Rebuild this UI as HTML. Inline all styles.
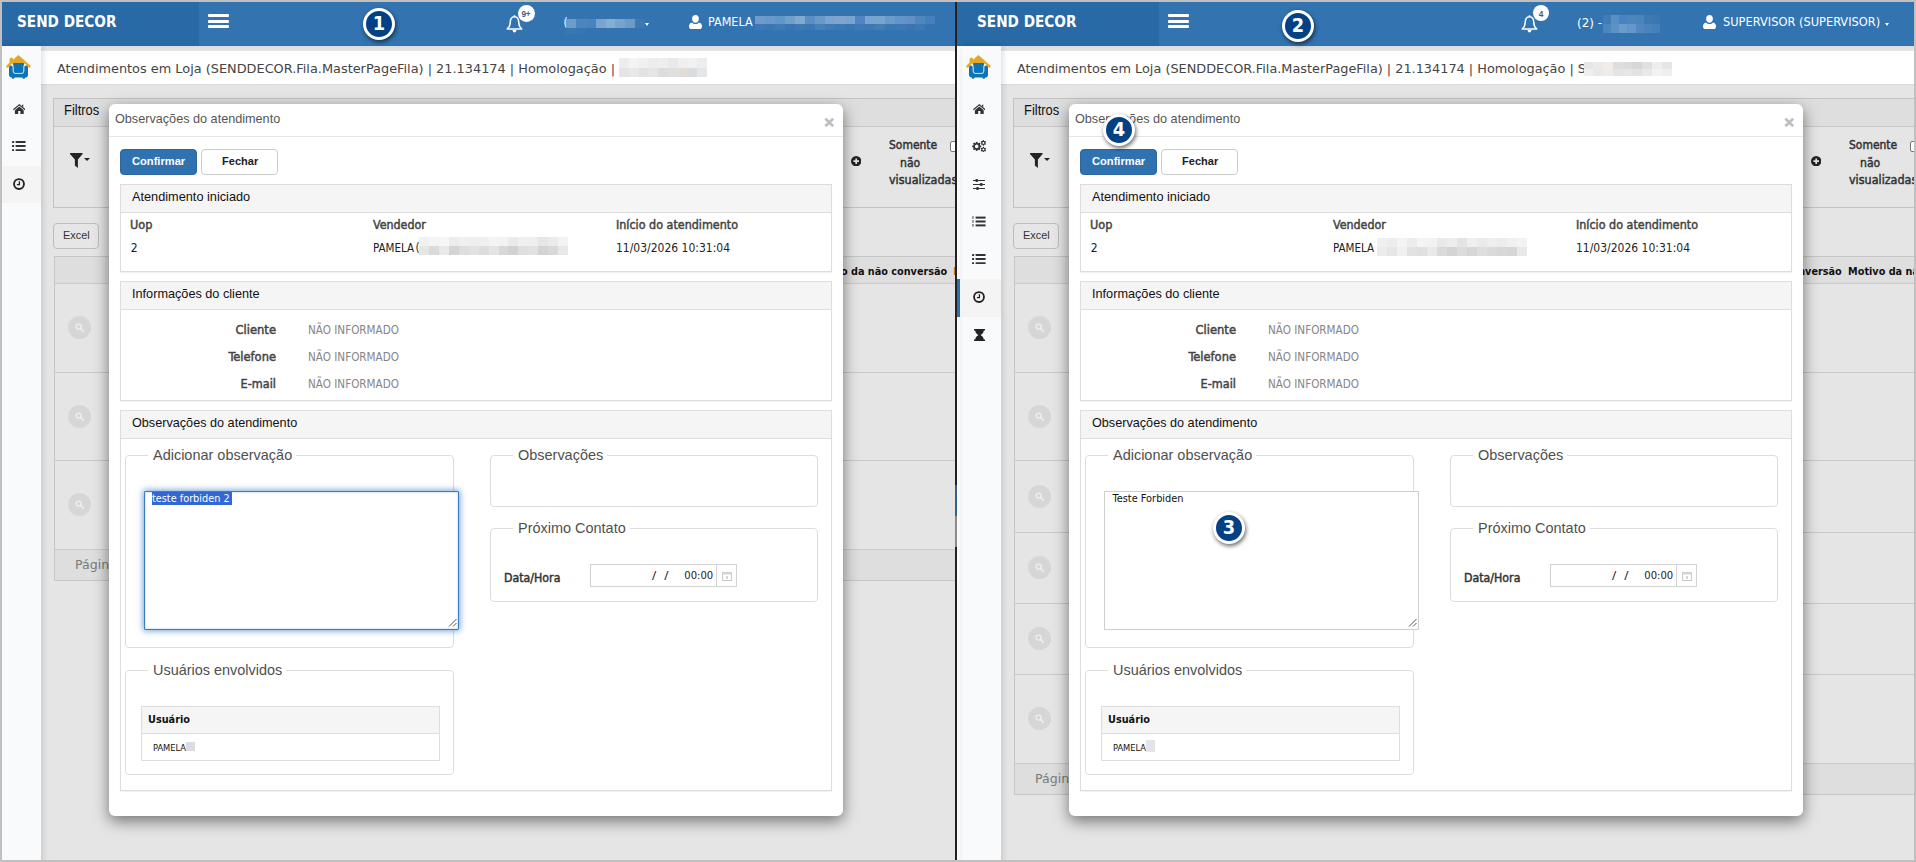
<!DOCTYPE html>
<html lang="pt-BR"><head><meta charset="utf-8"><title>Atendimentos em Loja</title>
<style>
html,body{margin:0;padding:0}
body{width:1916px;height:862px;background:#c0c0c0;position:relative;overflow:hidden;font-family:"Liberation Sans",sans-serif}
.pane{position:absolute;top:2px;height:858px;overflow:hidden;background:#e5e5e5}
#pl{left:2px;width:953px}
#pr{left:957px;width:957px}
.fr{position:absolute;top:-2px;width:0;height:0}
#pl .fr{left:-2px}
#pr .fr{left:3px}
#dv{position:absolute;left:955px;top:2px;width:2px;height:858px;background:#222}
.a{position:absolute;display:block}
.t{white-space:nowrap}
.nb{box-sizing:border-box;width:32.8px;height:32.8px;border-radius:50%;background:#024186;border:3.95px solid #fff;box-shadow:1px 2px 4px rgba(0,0,0,.6);color:#fff;font:bold 19.8px/26.4px "DejaVu Sans",sans-serif;text-align:center;overflow:hidden}
</style></head>
<body>
<div class="pane" id="pl"><div class="fr">
<div class="a " style="left:41px;top:51px;width:960px;height:33px;background:#fff;"></div>
<div class="a " style="left:41px;top:84px;width:960px;height:1px;background:#d9d9d9;"></div>
<div class="a t " style="left:56.8px;top:59.67px;font:12.8px/17px 'DejaVu Sans',sans-serif;color:#444;transform:scale(1.0059,1.000);transform-origin:0 12.93px;">Atendimentos em Loja (SENDDECOR.Fila.MasterPageFila) | 21.134174 | Homologação | </div>
<i class="a" style="left:619.0px;top:58.0px;width:10.1px;height:9.8px;background:#ededed"></i><i class="a" style="left:628.8px;top:58.0px;width:10.1px;height:9.8px;background:#f4f4f6"></i><i class="a" style="left:638.6px;top:58.0px;width:10.1px;height:9.8px;background:#f0f0f0"></i><i class="a" style="left:648.3px;top:58.0px;width:10.1px;height:9.8px;background:#ececec"></i><i class="a" style="left:658.1px;top:58.0px;width:10.1px;height:9.8px;background:#eeeeee"></i><i class="a" style="left:667.9px;top:58.0px;width:10.1px;height:9.8px;background:#e9e9e9"></i><i class="a" style="left:677.7px;top:58.0px;width:10.1px;height:9.8px;background:#efefef"></i><i class="a" style="left:687.4px;top:58.0px;width:10.1px;height:9.8px;background:#f1f1f1"></i><i class="a" style="left:697.2px;top:58.0px;width:10.1px;height:9.8px;background:#ededed"></i><i class="a" style="left:619.0px;top:67.5px;width:10.1px;height:9.8px;background:#e4e4e4"></i><i class="a" style="left:628.8px;top:67.5px;width:10.1px;height:9.8px;background:#e8e8e8"></i><i class="a" style="left:638.6px;top:67.5px;width:10.1px;height:9.8px;background:#e2e2e2"></i><i class="a" style="left:648.3px;top:67.5px;width:10.1px;height:9.8px;background:#e6e6e6"></i><i class="a" style="left:658.1px;top:67.5px;width:10.1px;height:9.8px;background:#dcdcde"></i><i class="a" style="left:667.9px;top:67.5px;width:10.1px;height:9.8px;background:#dfdfdf"></i><i class="a" style="left:677.7px;top:67.5px;width:10.1px;height:9.8px;background:#e3ddd8"></i><i class="a" style="left:687.4px;top:67.5px;width:10.1px;height:9.8px;background:#dadde0"></i><i class="a" style="left:697.2px;top:67.5px;width:10.1px;height:9.8px;background:#e6e6e6"></i>
<div class="a " style="left:53px;top:98px;width:960px;height:110px;box-sizing:border-box;border:1px solid #c3c3c3;background:#e5e5e5;"></div>
<div class="a " style="left:54px;top:99px;width:960px;height:27px;background:#dedede;border-bottom:1px solid #c9c9c9;"></div>
<div class="a t " style="left:64px;top:101.99px;font:13.6px/18px 'Liberation Sans',sans-serif;color:#111;transform:scale(0.9509,1.060);transform-origin:0 13.71px;">Filtros</div>
<svg class="a" style="left:70px;top:152.5px;" width="12.6" height="15" viewBox="0 0 12.6 15"><path fill="#222" d="M0.2 0 H12.4 Q12.9 0.6 12.4 1.2 L7.9 6.4 V15 L4.9 12.6 V6.4 L0.2 1.2 Q-0.3 0.6 0.2 0 Z"/></svg>
<div class="a " style="left:84.4px;top:158.2px;width:0px;height:0px;border-left:3.2px solid transparent;border-right:3.2px solid transparent;border-top:3.6px solid #222;"></div>
<svg class="a" style="left:850.5px;top:155.8px;" width="10.4" height="10.4" viewBox="0 0 10.4 10.4"><circle cx="5.2" cy="5.2" r="5.2" fill="#222"/><path d="M5.2 2.4 V8 M2.4 5.2 H8" stroke="#e5e5e5" stroke-width="1.7"/></svg>
<div class="a t " style="left:888.6px;top:136.88px;font:12.2px/16px 'DejaVu Sans Condensed','DejaVu Sans',sans-serif;color:#333;transform:scale(0.9815,1.000);transform-origin:0 12.22px;-webkit-text-stroke:0.45px #333;">Somente</div>
<div class="a t " style="left:899.6px;top:154.98px;font:12.2px/16px 'DejaVu Sans Condensed','DejaVu Sans',sans-serif;color:#333;transform:scale(0.9907,1.000);transform-origin:0 12.22px;-webkit-text-stroke:0.45px #333;">não</div>
<div class="a t " style="left:888.6px;top:172.18px;font:12.2px/16px 'DejaVu Sans Condensed','DejaVu Sans',sans-serif;color:#333;transform:scale(1.0211,1.000);transform-origin:0 12.22px;-webkit-text-stroke:0.45px #333;">visualizadas</div>
<div class="a " style="left:950px;top:141px;width:11px;height:11px;box-sizing:border-box;border:1px solid #767676;border-radius:2px;background:#fff;"></div>
<div class="a " style="left:53px;top:223px;width:45.5px;height:25.6px;box-sizing:border-box;border:1px solid #bdbdbd;border-radius:4px;background:#e6e6e6;"></div>
<div class="a t " style="left:62.8px;top:226.65px;font:11.7px/15px 'Liberation Sans',sans-serif;color:#333;transform:scale(0.9373,1.000);transform-origin:0 11.55px;">Excel</div>
<div class="a " style="left:54px;top:256px;width:960px;height:325px;box-sizing:border-box;border:1px solid #c6c6c6;border-right:0;background:#e5e5e5;"></div>
<div class="a " style="left:55px;top:257px;width:960px;height:26px;background:#dedede;"></div>
<div class="a " style="left:55px;top:282.5px;width:960px;height:1px;background:#cacaca;"></div>
<div class="a " style="left:55px;top:371.5px;width:960px;height:1px;background:#cacaca;"></div>
<div class="a " style="left:55px;top:459.5px;width:960px;height:1px;background:#cacaca;"></div>
<div class="a " style="left:55px;top:548.5px;width:960px;height:1px;background:#cacaca;"></div>
<div class="a " style="left:55px;top:549px;width:960px;height:31px;background:#dedede;border-top:1px solid #cacaca;box-sizing:border-box;"></div>
<div class="a" style="left:68.0px;top:316.0px;width:23px;height:23px;border-radius:50%;background:#d6d6d6"></div><svg class="a" style="left:75.0px;top:323.0px;" width="9" height="9" viewBox="0 0 9 9"><circle cx="3.6" cy="3.6" r="2.5" fill="none" stroke="#f0f0f0" stroke-width="1.3"/><path d="M5.5 5.5 L8.2 8.2" stroke="#f0f0f0" stroke-width="1.6" stroke-linecap="round"/></svg>
<div class="a" style="left:68.0px;top:404.5px;width:23px;height:23px;border-radius:50%;background:#d6d6d6"></div><svg class="a" style="left:75.0px;top:411.5px;" width="9" height="9" viewBox="0 0 9 9"><circle cx="3.6" cy="3.6" r="2.5" fill="none" stroke="#f0f0f0" stroke-width="1.3"/><path d="M5.5 5.5 L8.2 8.2" stroke="#f0f0f0" stroke-width="1.6" stroke-linecap="round"/></svg>
<div class="a" style="left:68.0px;top:493.0px;width:23px;height:23px;border-radius:50%;background:#d6d6d6"></div><svg class="a" style="left:75.0px;top:500.0px;" width="9" height="9" viewBox="0 0 9 9"><circle cx="3.6" cy="3.6" r="2.5" fill="none" stroke="#f0f0f0" stroke-width="1.3"/><path d="M5.5 5.5 L8.2 8.2" stroke="#f0f0f0" stroke-width="1.6" stroke-linecap="round"/></svg>
<div class="a t " style="left:75px;top:557.44px;font:12.6px/16px 'DejaVu Sans',sans-serif;color:#7a7a7a;">Página</div>
<div class="a t " style="left:947.20px;top:264.54px;font:bold 9.7px/13px 'DejaVu Sans',sans-serif;color:#111;transform:translateX(-100%);">Motivo da não conversão</div>
<div class="a t " style="left:953.2px;top:264.54px;font:bold 9.7px/13px 'DejaVu Sans',sans-serif;color:#b07020;">Motivo</div>
<div class="a " style="left:-3px;top:2px;width:201.5px;height:44px;background:#2869a6;"></div>
<div class="a " style="left:198.5px;top:2px;width:770px;height:44px;background:#3273b0;"></div>
<div class="a " style="left:-3px;top:46px;width:980px;height:5px;background:linear-gradient(#dcdcdc,#e5e5e5);"></div>
<div class="a t " style="left:17.3px;top:10.96px;font:bold 16.6px/22px 'DejaVu Sans Condensed','DejaVu Sans',sans-serif;color:#fff;transform:scale(0.9147,1.000);transform-origin:0 16.74px;">SEND DECOR</div>
<div class="a " style="left:207.5px;top:14px;width:21.3px;height:3px;background:#fff;border-radius:1px;"></div>
<div class="a " style="left:207.5px;top:19.6px;width:21.3px;height:3px;background:#fff;border-radius:1px;"></div>
<div class="a " style="left:207.5px;top:25.2px;width:21.3px;height:3px;background:#fff;border-radius:1px;"></div>
<svg class="a" style="left:506px;top:15px;" width="17" height="18" viewBox="0 0 17 18"><path fill="none" stroke="#fff" stroke-width="1.5" stroke-linejoin="round" d="M8.5 1.8 C5.4 1.8 4.3 4.4 4.3 7 C4.3 10.6 2.8 12.6 1.2 14 H15.8 C14.2 12.6 12.7 10.6 12.7 7 C12.7 4.4 11.6 1.8 8.5 1.8 Z"/><path fill="#fff" d="M7.7 0.3 H9.3 V2 H7.7 Z M6.6 15 H10.4 C10.4 16.4 9.6 17.4 8.5 17.4 C7.4 17.4 6.6 16.4 6.6 15 Z"/></svg>
<div class="a " style="left:518px;top:5.3px;width:17px;height:17px;border-radius:50%;background:#fff;"></div>
<div class="a t " style="left:521.6px;top:8.96px;font:bold 8.2px/11px 'Liberation Sans',sans-serif;color:#3a5d8c;letter-spacing:-0.3px;">9+</div>
<div class="a t " style="left:563.6px;top:16.12px;font:11.8px/15px 'DejaVu Sans Condensed','DejaVu Sans',sans-serif;color:#fff;">(</div>
<i class="a" style="left:566.0px;top:19.0px;width:10.2px;height:9.3px;background:#6f9bcb"></i><i class="a" style="left:575.9px;top:19.0px;width:10.2px;height:9.3px;background:#4d86bd"></i><i class="a" style="left:585.8px;top:19.0px;width:10.2px;height:9.3px;background:#4a84bc"></i><i class="a" style="left:595.6px;top:19.0px;width:10.2px;height:9.3px;background:#7aa3ce"></i><i class="a" style="left:605.5px;top:19.0px;width:10.2px;height:9.3px;background:#86aed4"></i><i class="a" style="left:615.4px;top:19.0px;width:10.2px;height:9.3px;background:#78a3cf"></i><i class="a" style="left:625.2px;top:19.0px;width:10.2px;height:9.3px;background:#6c9ac9"></i><i class="a" style="left:635.1px;top:19.0px;width:10.2px;height:9.3px;background:#3d7ab4"></i>
<i class="a" style="left:566.0px;top:28.0px;width:9.8px;height:6.3px;background:#3a78b4"></i><i class="a" style="left:575.5px;top:28.0px;width:9.8px;height:6.3px;background:#3875b2"></i>
<div class="a " style="left:645px;top:22.5px;width:0px;height:0px;border-left:2px solid transparent;border-right:2px solid transparent;border-top:3px solid #fff;"></div>
<svg class="a" style="left:689px;top:15.3px;" width="13" height="14" viewBox="0 0 13 14"><path fill="#fff" d="M6.5 0 C8.6 0 9.9 1.6 9.9 3.8 C9.9 6 8.6 7.8 6.5 7.8 C4.4 7.8 3.1 6 3.1 3.8 C3.1 1.6 4.4 0 6.5 0 Z M3 7.4 C3.9 8.5 5.1 9.1 6.5 9.1 C7.9 9.1 9.1 8.5 10 7.4 C11.9 7.8 13 9.2 13 11.4 C13 13 12 14 10.6 14 H2.4 C1 14 0 13 0 11.4 C0 9.2 1.1 7.8 3 7.4 Z"/></svg>
<div class="a t " style="left:708px;top:15.32px;font:11.8px/15px 'DejaVu Sans Condensed','DejaVu Sans',sans-serif;color:#fff;transform:scale(1.0564,1.000);transform-origin:0 11.58px;">PAMELA</div>
<i class="a" style="left:755.0px;top:16.0px;width:10.3px;height:8.3px;background:#6e9bc9"></i><i class="a" style="left:765.0px;top:16.0px;width:10.3px;height:8.3px;background:#6a99c8"></i><i class="a" style="left:775.0px;top:16.0px;width:10.3px;height:8.3px;background:#5f97c7"></i><i class="a" style="left:785.0px;top:16.0px;width:10.3px;height:8.3px;background:#739ecb"></i><i class="a" style="left:795.0px;top:16.0px;width:10.3px;height:8.3px;background:#81a8cf"></i><i class="a" style="left:805.0px;top:16.0px;width:10.3px;height:8.3px;background:#5b8fc4"></i><i class="a" style="left:815.0px;top:16.0px;width:10.3px;height:8.3px;background:#6a99c7"></i><i class="a" style="left:825.0px;top:16.0px;width:10.3px;height:8.3px;background:#7aa3cf"></i><i class="a" style="left:835.0px;top:16.0px;width:10.3px;height:8.3px;background:#80a4cf"></i><i class="a" style="left:845.0px;top:16.0px;width:10.3px;height:8.3px;background:#7aa3cd"></i><i class="a" style="left:855.0px;top:16.0px;width:10.3px;height:8.3px;background:#5284c0"></i><i class="a" style="left:865.0px;top:16.0px;width:10.3px;height:8.3px;background:#79a4cd"></i><i class="a" style="left:875.0px;top:16.0px;width:10.3px;height:8.3px;background:#79a4cd"></i><i class="a" style="left:885.0px;top:16.0px;width:10.3px;height:8.3px;background:#6c9acb"></i><i class="a" style="left:895.0px;top:16.0px;width:10.3px;height:8.3px;background:#6495c7"></i><i class="a" style="left:905.0px;top:16.0px;width:10.3px;height:8.3px;background:#6490c6"></i><i class="a" style="left:915.0px;top:16.0px;width:10.3px;height:8.3px;background:#4f86be"></i><i class="a" style="left:925.0px;top:16.0px;width:10.3px;height:8.3px;background:#4580ba"></i>
<i class="a" style="left:755.0px;top:24.0px;width:10.3px;height:6.3px;background:#3c79b5"></i><i class="a" style="left:765.0px;top:24.0px;width:10.3px;height:6.3px;background:#3a78b4"></i><i class="a" style="left:775.0px;top:24.0px;width:10.3px;height:6.3px;background:#3f7cb7"></i><i class="a" style="left:785.0px;top:24.0px;width:10.3px;height:6.3px;background:#3875b2"></i><i class="a" style="left:795.0px;top:24.0px;width:10.3px;height:6.3px;background:#3d7ab5"></i><i class="a" style="left:805.0px;top:24.0px;width:10.3px;height:6.3px;background:#3a78b4"></i><i class="a" style="left:815.0px;top:24.0px;width:10.3px;height:6.3px;background:#4582bb"></i><i class="a" style="left:825.0px;top:24.0px;width:10.3px;height:6.3px;background:#3f7cb7"></i><i class="a" style="left:835.0px;top:24.0px;width:10.3px;height:6.3px;background:#3b78b4"></i><i class="a" style="left:845.0px;top:24.0px;width:10.3px;height:6.3px;background:#3875b2"></i><i class="a" style="left:855.0px;top:24.0px;width:10.3px;height:6.3px;background:#3e7bb6"></i><i class="a" style="left:865.0px;top:24.0px;width:10.3px;height:6.3px;background:#3c79b5"></i><i class="a" style="left:875.0px;top:24.0px;width:10.3px;height:6.3px;background:#417eb8"></i><i class="a" style="left:885.0px;top:24.0px;width:10.3px;height:6.3px;background:#3a78b4"></i><i class="a" style="left:895.0px;top:24.0px;width:10.3px;height:6.3px;background:#3d7ab5"></i><i class="a" style="left:905.0px;top:24.0px;width:10.3px;height:6.3px;background:#3875b2"></i><i class="a" style="left:915.0px;top:24.0px;width:10.3px;height:6.3px;background:#3c79b5"></i>
<div class="a " style="left:-3px;top:46px;width:44px;height:820px;background:#fff;"></div>
<div class="a " style="left:2px;top:46px;width:39px;height:820px;background:#f9fafc;box-shadow:1px 0 7px rgba(0,0,0,.16);"></div>
<svg class="a" style="left:6px;top:55px;" width="25" height="24" viewBox="0 0 25 24"><path fill="#e2a82a" d="M12.4 0 L25 11.2 L23.3 13 L20.6 10.6 L19.5 8.8 H5.5 L4.4 10.6 L1.7 13 L0 11.2 L3.6 7.6 V3.6 L5.4 2.6 L7 3.6 V4.8 Z"/><path fill="#0e73b5" d="M8 8 H17 Q18.3 8 18.1 9.4 L17.4 18 H7.6 L6.9 9.4 Q6.7 8 8 8 Z"/><path fill="#0e73b5" d="M3 12.4 Q3 10.4 5 10.4 Q6.8 10.4 6.8 12.4 V16 Q6.8 18.8 9.4 18.8 H15.6 Q18.2 18.8 18.2 16 V12.4 Q18.2 10.4 20 10.4 Q22 10.4 22 12.4 V19.5 Q22 22.4 19.4 22.4 L18.6 23.8 H17 L16.4 22.4 H8.6 L8 23.8 H6.4 L5.6 22.4 Q3 22.4 3 19.5 Z"/><path fill="none" stroke="#b7d6ec" stroke-width="0.9" d="M7.3 10.4 V16.2 Q7.3 18.4 9.6 18.4 H15.4 Q17.7 18.4 17.7 16.2 V10.4"/></svg>
<div class="a " style="left:2px;top:166px;width:39px;height:37px;background:#f4f4f5;"></div>
<svg class="a" style="left:12.7px;top:103.5px;" width="12.6" height="10" viewBox="0 0 12.6 10"><path fill="#333" d="M6.3 0 L12.6 5.3 L11.8 6.2 L6.3 1.6 L0.8 6.2 L0 5.3 Z M8.9 0.7 H10.3 V3 L8.9 1.8 Z M6.3 2.6 L10.7 6.3 V10 H7.4 V7 H5.2 V10 H1.9 V6.3 Z"/></svg>
<svg class="a" style="left:12.2px;top:141.1px;" width="13.6" height="10.2" viewBox="0 0 13.6 10.2"><rect x="0" y="0" width="2.1" height="2" rx=".5" fill="#333"/><rect x="3.6" y="0" width="10" height="2" rx=".4" fill="#333"/><rect x="0" y="4.1" width="2.1" height="2" rx=".5" fill="#333"/><rect x="3.6" y="4.1" width="10" height="2" rx=".4" fill="#333"/><rect x="0" y="8.2" width="2.1" height="2" rx=".5" fill="#333"/><rect x="3.6" y="8.2" width="10" height="2" rx=".4" fill="#333"/></svg>
<svg class="a" style="left:13px;top:178.1px;" width="12" height="12" viewBox="0 0 12 12"><circle cx="6" cy="6" r="4.95" fill="none" stroke="#222" stroke-width="1.85"/><path d="M6.4 3.2 V6.6 H3.9" fill="none" stroke="#222" stroke-width="1.35"/></svg>
<div class="a " style="left:109px;top:104px;width:734px;height:712px;background:#fff;border-radius:6px;box-shadow:0 5px 15px rgba(0,0,0,.5);"></div>
<div class="a " style="left:109px;top:136px;width:734px;height:1px;background:#e5e5e5;"></div>
<div class="a t " style="left:115.4px;top:111.13px;font:12.6px/16px 'Liberation Sans',sans-serif;color:#555;transform:scale(1.0041,1.040);transform-origin:0 12.37px;">Observações do atendimento</div>
<div class="a t " style="left:824.3px;top:112.01px;font:bold 17px/22px 'Liberation Sans',sans-serif;color:#bdbdbd;-webkit-text-stroke:0.7px #bdbdbd;">×</div>
<div class="a " style="left:120px;top:149px;width:77px;height:26px;box-sizing:border-box;background:#3071b0;border:1px solid #2b66a0;border-radius:4px;"></div>
<div class="a t " style="left:132.2px;top:154.29px;font:bold 11px/14px 'Liberation Sans',sans-serif;color:#fff;transform:scale(1.0121,1.000);transform-origin:0 10.81px;">Confirmar</div>
<div class="a " style="left:201px;top:149px;width:77px;height:26px;box-sizing:border-box;background:#fff;border:1px solid #ccc;border-radius:4px;"></div>
<div class="a t " style="left:221.8px;top:154.29px;font:bold 11px/14px 'Liberation Sans',sans-serif;color:#222;transform:scale(1.0034,1.000);transform-origin:0 10.81px;">Fechar</div>
<div class="a " style="left:120px;top:184px;width:712px;height:88px;box-sizing:border-box;border:1px solid #ddd;background:#fff;box-shadow:0 1px 1px rgba(0,0,0,.05);"></div><div class="a " style="left:121px;top:185px;width:710px;height:28px;box-sizing:border-box;background:#f5f5f5;border-bottom:1px solid #ddd;"></div><div class="a t " style="left:132.2px;top:189.13px;font:12.6px/16px 'Liberation Sans',sans-serif;color:#111;transform:scale(1.0109,1.040);transform-origin:0 12.37px;">Atendimento iniciado</div>
<div class="a " style="left:120px;top:281px;width:712px;height:119.5px;box-sizing:border-box;border:1px solid #ddd;background:#fff;box-shadow:0 1px 1px rgba(0,0,0,.05);"></div><div class="a " style="left:121px;top:282px;width:710px;height:28px;box-sizing:border-box;background:#f5f5f5;border-bottom:1px solid #ddd;"></div><div class="a t " style="left:132.2px;top:286.13px;font:12.6px/16px 'Liberation Sans',sans-serif;color:#111;transform:scale(1.0070,1.040);transform-origin:0 12.37px;">Informações do cliente</div>
<div class="a " style="left:120px;top:410px;width:712px;height:380.5px;box-sizing:border-box;border:1px solid #ddd;background:#fff;box-shadow:0 1px 1px rgba(0,0,0,.05);"></div><div class="a " style="left:121px;top:411px;width:710px;height:28px;box-sizing:border-box;background:#f5f5f5;border-bottom:1px solid #ddd;"></div><div class="a t " style="left:132.2px;top:415.13px;font:12.6px/16px 'Liberation Sans',sans-serif;color:#111;transform:scale(1.0041,1.040);transform-origin:0 12.37px;">Observações do atendimento</div>
<div class="a t " style="left:130.2px;top:217.08px;font:12.2px/16px 'DejaVu Sans Condensed','DejaVu Sans',sans-serif;color:#444;transform:scale(1.0321,1.000);transform-origin:0 12.22px;-webkit-text-stroke:0.45px #444;">Uop</div>
<div class="a t " style="left:373px;top:217.08px;font:12.2px/16px 'DejaVu Sans Condensed','DejaVu Sans',sans-serif;color:#444;transform:scale(1.0126,1.000);transform-origin:0 12.22px;-webkit-text-stroke:0.45px #444;">Vendedor</div>
<div class="a t " style="left:616px;top:217.08px;font:12.2px/16px 'DejaVu Sans Condensed','DejaVu Sans',sans-serif;color:#444;transform:scale(1.0187,1.000);transform-origin:0 12.22px;-webkit-text-stroke:0.45px #444;">Início do atendimento</div>
<div class="a t " style="left:130.8px;top:239.75px;font:12px/16px 'DejaVu Sans Condensed','DejaVu Sans',sans-serif;color:#222;transform:scale(1.0000,1.050);transform-origin:0 12.15px;">2</div>
<div class="a t " style="left:373.2px;top:239.75px;font:12px/16px 'DejaVu Sans Condensed','DejaVu Sans',sans-serif;color:#222;transform:scale(0.9595,1.050);transform-origin:0 12.15px;">PAMELA</div>
<div class="a t " style="left:616.2px;top:239.75px;font:12px/16px 'DejaVu Sans Condensed','DejaVu Sans',sans-serif;color:#222;transform:scale(0.9989,1.050);transform-origin:0 12.15px;">11/03/2026 10:31:04</div>
<i class="a" style="left:419.0px;top:237.0px;width:10.2px;height:9.3px;background:#f1f1f1"></i><i class="a" style="left:428.9px;top:237.0px;width:10.2px;height:9.3px;background:#f4f4f4"></i><i class="a" style="left:438.9px;top:237.0px;width:10.2px;height:9.3px;background:#f6f6f6"></i><i class="a" style="left:448.8px;top:237.0px;width:10.2px;height:9.3px;background:#ececec"></i><i class="a" style="left:458.7px;top:237.0px;width:10.2px;height:9.3px;background:#f0f0f0"></i><i class="a" style="left:468.7px;top:237.0px;width:10.2px;height:9.3px;background:#eeeeee"></i><i class="a" style="left:478.6px;top:237.0px;width:10.2px;height:9.3px;background:#efefef"></i><i class="a" style="left:488.5px;top:237.0px;width:10.2px;height:9.3px;background:#f4f4f4"></i><i class="a" style="left:498.5px;top:237.0px;width:10.2px;height:9.3px;background:#f2f2f2"></i><i class="a" style="left:508.4px;top:237.0px;width:10.2px;height:9.3px;background:#eaeaea"></i><i class="a" style="left:518.3px;top:237.0px;width:10.2px;height:9.3px;background:#efefef"></i><i class="a" style="left:528.3px;top:237.0px;width:10.2px;height:9.3px;background:#eeeeee"></i><i class="a" style="left:538.2px;top:237.0px;width:10.2px;height:9.3px;background:#e6e6e6"></i><i class="a" style="left:548.1px;top:237.0px;width:10.2px;height:9.3px;background:#ebebeb"></i><i class="a" style="left:558.1px;top:237.0px;width:10.2px;height:9.3px;background:#f3f3f3"></i>
<i class="a" style="left:419.0px;top:246.0px;width:10.2px;height:9.3px;background:#e6e6e6"></i><i class="a" style="left:428.9px;top:246.0px;width:10.2px;height:9.3px;background:#dadada"></i><i class="a" style="left:438.9px;top:246.0px;width:10.2px;height:9.3px;background:#e9e9e9"></i><i class="a" style="left:448.8px;top:246.0px;width:10.2px;height:9.3px;background:#d4d4d4"></i><i class="a" style="left:458.7px;top:246.0px;width:10.2px;height:9.3px;background:#dedede"></i><i class="a" style="left:468.7px;top:246.0px;width:10.2px;height:9.3px;background:#e2e2e2"></i><i class="a" style="left:478.6px;top:246.0px;width:10.2px;height:9.3px;background:#dddddd"></i><i class="a" style="left:488.5px;top:246.0px;width:10.2px;height:9.3px;background:#e4e4e4"></i><i class="a" style="left:498.5px;top:246.0px;width:10.2px;height:9.3px;background:#d8d8d8"></i><i class="a" style="left:508.4px;top:246.0px;width:10.2px;height:9.3px;background:#d2d2d2"></i><i class="a" style="left:518.3px;top:246.0px;width:10.2px;height:9.3px;background:#dfdfdf"></i><i class="a" style="left:528.3px;top:246.0px;width:10.2px;height:9.3px;background:#e1e1e1"></i><i class="a" style="left:538.2px;top:246.0px;width:10.2px;height:9.3px;background:#d3d3d3"></i><i class="a" style="left:548.1px;top:246.0px;width:10.2px;height:9.3px;background:#d9d9d9"></i><i class="a" style="left:558.1px;top:246.0px;width:10.2px;height:9.3px;background:#e8e8e8"></i>
<div class="a t " style="left:415.5px;top:239.75px;font:12px/16px 'DejaVu Sans Condensed','DejaVu Sans',sans-serif;color:#333;">(</div>
<div class="a t " style="left:275.90px;top:322.08px;font:12.2px/16px 'DejaVu Sans Condensed','DejaVu Sans',sans-serif;color:#444;transform:translateX(-100%) scale(1.0545,1.000);transform-origin:100% 12.22px;-webkit-text-stroke:0.45px #444;">Cliente</div>
<div class="a t " style="left:307.8px;top:322.99px;font:11.6px/15px 'DejaVu Sans Condensed','DejaVu Sans',sans-serif;color:#858585;transform:scale(1.0003,1.000);transform-origin:0 11.51px;">NÃO INFORMADO</div>
<div class="a t " style="left:275.90px;top:349.08px;font:12.2px/16px 'DejaVu Sans Condensed','DejaVu Sans',sans-serif;color:#444;transform:translateX(-100%) scale(1.0476,1.000);transform-origin:100% 12.22px;-webkit-text-stroke:0.45px #444;">Telefone</div>
<div class="a t " style="left:307.8px;top:349.99px;font:11.6px/15px 'DejaVu Sans Condensed','DejaVu Sans',sans-serif;color:#858585;transform:scale(1.0003,1.000);transform-origin:0 11.51px;">NÃO INFORMADO</div>
<div class="a t " style="left:275.90px;top:376.08px;font:12.2px/16px 'DejaVu Sans Condensed','DejaVu Sans',sans-serif;color:#444;transform:translateX(-100%) scale(1.0294,1.000);transform-origin:100% 12.22px;-webkit-text-stroke:0.45px #444;">E-mail</div>
<div class="a t " style="left:307.8px;top:376.99px;font:11.6px/15px 'DejaVu Sans Condensed','DejaVu Sans',sans-serif;color:#858585;transform:scale(1.0003,1.000);transform-origin:0 11.51px;">NÃO INFORMADO</div>
<div class="a " style="left:125px;top:455px;width:329px;height:193px;box-sizing:border-box;border:1px solid #ddd;border-radius:4px;"></div><div class="a " style="left:148px;top:453px;width:148px;height:5px;background:#fff;"></div><div class="a t " style="left:152.7px;top:445.78px;font:14.5px/19px 'Liberation Sans',sans-serif;color:#4f4f4f;transform:scale(0.9982,1.000);transform-origin:0 14.52px;">Adicionar observação</div>
<div class="a " style="left:490px;top:455px;width:328px;height:51.5px;box-sizing:border-box;border:1px solid #ddd;border-radius:4px;"></div><div class="a " style="left:513px;top:453px;width:94px;height:5px;background:#fff;"></div><div class="a t " style="left:517.7px;top:445.78px;font:14.5px/19px 'Liberation Sans',sans-serif;color:#4f4f4f;transform:scale(0.9972,1.000);transform-origin:0 14.52px;">Observações</div>
<div class="a " style="left:490px;top:528px;width:328px;height:73.5px;box-sizing:border-box;border:1px solid #ddd;border-radius:4px;"></div><div class="a " style="left:513px;top:526px;width:116.5px;height:5px;background:#fff;"></div><div class="a t " style="left:517.7px;top:518.78px;font:14.5px/19px 'Liberation Sans',sans-serif;color:#4f4f4f;transform:scale(0.9972,1.000);transform-origin:0 14.52px;">Próximo Contato</div>
<div class="a " style="left:125px;top:670px;width:329px;height:104.5px;box-sizing:border-box;border:1px solid #ddd;border-radius:4px;"></div><div class="a " style="left:148px;top:668px;width:138px;height:5px;background:#fff;"></div><div class="a t " style="left:152.7px;top:660.78px;font:14.5px/19px 'Liberation Sans',sans-serif;color:#4f4f4f;transform:scale(0.9956,1.000);transform-origin:0 14.52px;">Usuários envolvidos</div>
<div class="a " style="left:144px;top:491px;width:314.5px;height:138.5px;box-sizing:border-box;border:1px solid #3b7cc0;background:#fff;box-shadow:0 0 6px 1px rgba(70,135,205,.75), inset 0 0 2px rgba(60,125,195,.5);border-radius:1px;"></div>
<div class="a " style="left:152px;top:492px;width:79.8px;height:13px;background:#3367d1;"></div>
<div class="a t " style="left:152.4px;top:491.71px;font:9.8px/13px 'DejaVu Sans',sans-serif;color:#fff;transform:scale(0.9927,1.000);transform-origin:0 9.89px;">teste forbiden 2</div>
<svg class="a" style="left:448px;top:618px;" width="9" height="9" viewBox="0 0 9 9"><path d="M8.5 1 L1 8.5 M8.5 5 L5 8.5" stroke="#555" stroke-width="1"/></svg>
<div class="a t " style="left:503.6px;top:569.88px;font:12.2px/16px 'DejaVu Sans Condensed','DejaVu Sans',sans-serif;color:#333;transform:scale(1.0060,1.000);transform-origin:0 12.22px;-webkit-text-stroke:0.45px #333;">Data/Hora</div>
<div class="a " style="left:590px;top:564px;width:146.5px;height:22.5px;box-sizing:border-box;border:1px solid #d2d2d2;background:#fff;"></div>
<div class="a " style="left:716px;top:564px;width:1px;height:22.5px;background:#d2d2d2;"></div>
<div class="a t " style="left:651.5px;top:568.64px;font:10px/13px 'DejaVu Sans',sans-serif;color:#222;transform:scale(1.2510,1.000);transform-origin:0 9.96px;">/&nbsp;&nbsp;/</div>
<div class="a t " style="left:684.3px;top:568.64px;font:10px/13px 'DejaVu Sans',sans-serif;color:#222;">00:00</div>
<svg class="a" style="left:721.5px;top:570.5px;" width="10" height="10" viewBox="0 0 10 10"><rect x="0.5" y="1.5" width="9" height="8" fill="#fff" stroke="#c9c9c9" stroke-width="1"/><rect x="0.5" y="1.5" width="9" height="2" fill="#d5d5d5"/><rect x="4" y="5" width="2" height="3" fill="#d0d8e4"/></svg>
<div class="a " style="left:141px;top:706px;width:299px;height:54.5px;box-sizing:border-box;border:1px solid #ddd;background:#fff;"></div>
<div class="a " style="left:142px;top:707px;width:297px;height:26.5px;box-sizing:border-box;background:#f5f5f5;border-bottom:1px solid #ddd;"></div>
<div class="a t " style="left:147.6px;top:712.91px;font:bold 9.8px/13px 'DejaVu Sans',sans-serif;color:#111;transform:scale(0.9930,1.000);transform-origin:0 9.89px;">Usuário</div>
<div class="a t " style="left:152.6px;top:741.92px;font:9.2px/12px 'DejaVu Sans Condensed','DejaVu Sans',sans-serif;color:#111;transform:scale(1.0038,1.000);transform-origin:0 9.18px;">PAMELA</div>
<div class="a " style="left:186px;top:741.5px;width:8.6px;height:9px;background:#dcdcde;"></div>
<div class="a nb" style="left:362.7px;top:7.5px"><b style="display:inline-block;transform:scaleX(.9)">1</b></div>
</div></div>
<div id="dv"><i class="a" style="left:0;top:483px;width:2px;height:31px;background:#34608f"></i><i class="a" style="left:0;top:514px;width:2px;height:31px;background:#8a8a8a"></i></div>
<div class="pane" id="pr"><div class="fr">
<div class="a " style="left:41px;top:51px;width:960px;height:33px;background:#fff;"></div>
<div class="a " style="left:41px;top:84px;width:960px;height:1px;background:#d9d9d9;"></div>
<div class="a t " style="left:56.8px;top:59.67px;font:12.8px/17px 'DejaVu Sans',sans-serif;color:#444;transform:scale(1.0037,1.000);transform-origin:0 12.93px;">Atendimentos em Loja (SENDDECOR.Fila.MasterPageFila) | 21.134174 | Homologação | S</div>
<i class="a" style="left:623.5px;top:62.0px;width:10.1px;height:7.3px;background:#e6e6e6"></i><i class="a" style="left:633.3px;top:62.0px;width:10.1px;height:7.3px;background:#ebebeb"></i><i class="a" style="left:643.1px;top:62.0px;width:10.1px;height:7.3px;background:#f3ece8"></i><i class="a" style="left:652.8px;top:62.0px;width:10.1px;height:7.3px;background:#dedede"></i><i class="a" style="left:662.6px;top:62.0px;width:10.1px;height:7.3px;background:#d9dbde"></i><i class="a" style="left:672.4px;top:62.0px;width:10.1px;height:7.3px;background:#d6d6d6"></i><i class="a" style="left:682.2px;top:62.0px;width:10.1px;height:7.3px;background:#e0e0e0"></i><i class="a" style="left:691.9px;top:62.0px;width:10.1px;height:7.3px;background:#eeeeee"></i><i class="a" style="left:701.7px;top:62.0px;width:10.1px;height:7.3px;background:#e6e6e6"></i><i class="a" style="left:623.5px;top:69.0px;width:10.1px;height:7.3px;background:#eeeeee"></i><i class="a" style="left:633.3px;top:69.0px;width:10.1px;height:7.3px;background:#e9e9e9"></i><i class="a" style="left:643.1px;top:69.0px;width:10.1px;height:7.3px;background:#ececec"></i><i class="a" style="left:652.8px;top:69.0px;width:10.1px;height:7.3px;background:#e4e4e4"></i><i class="a" style="left:662.6px;top:69.0px;width:10.1px;height:7.3px;background:#e6e6e6"></i><i class="a" style="left:672.4px;top:69.0px;width:10.1px;height:7.3px;background:#e2e2e2"></i><i class="a" style="left:682.2px;top:69.0px;width:10.1px;height:7.3px;background:#e9e9e9"></i><i class="a" style="left:691.9px;top:69.0px;width:10.1px;height:7.3px;background:#f2f2f2"></i><i class="a" style="left:701.7px;top:69.0px;width:10.1px;height:7.3px;background:#eef0f0"></i>
<div class="a " style="left:53px;top:98px;width:960px;height:110px;box-sizing:border-box;border:1px solid #c3c3c3;background:#e5e5e5;"></div>
<div class="a " style="left:54px;top:99px;width:960px;height:27px;background:#dedede;border-bottom:1px solid #c9c9c9;"></div>
<div class="a t " style="left:64px;top:101.99px;font:13.6px/18px 'Liberation Sans',sans-serif;color:#111;transform:scale(0.9509,1.060);transform-origin:0 13.71px;">Filtros</div>
<svg class="a" style="left:70px;top:152.5px;" width="12.6" height="15" viewBox="0 0 12.6 15"><path fill="#222" d="M0.2 0 H12.4 Q12.9 0.6 12.4 1.2 L7.9 6.4 V15 L4.9 12.6 V6.4 L0.2 1.2 Q-0.3 0.6 0.2 0 Z"/></svg>
<div class="a " style="left:84.4px;top:158.2px;width:0px;height:0px;border-left:3.2px solid transparent;border-right:3.2px solid transparent;border-top:3.6px solid #222;"></div>
<svg class="a" style="left:850.5px;top:155.8px;" width="10.4" height="10.4" viewBox="0 0 10.4 10.4"><circle cx="5.2" cy="5.2" r="5.2" fill="#222"/><path d="M5.2 2.4 V8 M2.4 5.2 H8" stroke="#e5e5e5" stroke-width="1.7"/></svg>
<div class="a t " style="left:888.6px;top:136.88px;font:12.2px/16px 'DejaVu Sans Condensed','DejaVu Sans',sans-serif;color:#333;transform:scale(0.9815,1.000);transform-origin:0 12.22px;-webkit-text-stroke:0.45px #333;">Somente</div>
<div class="a t " style="left:899.6px;top:154.98px;font:12.2px/16px 'DejaVu Sans Condensed','DejaVu Sans',sans-serif;color:#333;transform:scale(0.9907,1.000);transform-origin:0 12.22px;-webkit-text-stroke:0.45px #333;">não</div>
<div class="a t " style="left:888.6px;top:172.18px;font:12.2px/16px 'DejaVu Sans Condensed','DejaVu Sans',sans-serif;color:#333;transform:scale(1.0211,1.000);transform-origin:0 12.22px;-webkit-text-stroke:0.45px #333;">visualizadas</div>
<div class="a " style="left:950px;top:141px;width:11px;height:11px;box-sizing:border-box;border:1px solid #767676;border-radius:2px;background:#fff;"></div>
<div class="a " style="left:53px;top:223px;width:45.5px;height:25.6px;box-sizing:border-box;border:1px solid #bdbdbd;border-radius:4px;background:#e6e6e6;"></div>
<div class="a t " style="left:62.8px;top:226.65px;font:11.7px/15px 'Liberation Sans',sans-serif;color:#333;transform:scale(0.9373,1.000);transform-origin:0 11.55px;">Excel</div>
<div class="a " style="left:54px;top:256px;width:960px;height:539px;box-sizing:border-box;border:1px solid #c6c6c6;border-right:0;background:#e5e5e5;"></div>
<div class="a " style="left:55px;top:257px;width:960px;height:26px;background:#dedede;"></div>
<div class="a " style="left:55px;top:282.5px;width:960px;height:1px;background:#cacaca;"></div>
<div class="a " style="left:55px;top:371.5px;width:960px;height:1px;background:#cacaca;"></div>
<div class="a " style="left:55px;top:459.5px;width:960px;height:1px;background:#cacaca;"></div>
<div class="a " style="left:55px;top:531.5px;width:960px;height:1px;background:#cacaca;"></div>
<div class="a " style="left:55px;top:602.5px;width:960px;height:1px;background:#cacaca;"></div>
<div class="a " style="left:55px;top:673.5px;width:960px;height:1px;background:#cacaca;"></div>
<div class="a " style="left:55px;top:762.5px;width:960px;height:1px;background:#cacaca;"></div>
<div class="a " style="left:55px;top:763px;width:960px;height:31px;background:#dedede;border-top:1px solid #cacaca;box-sizing:border-box;"></div>
<div class="a" style="left:68.0px;top:316.0px;width:23px;height:23px;border-radius:50%;background:#d6d6d6"></div><svg class="a" style="left:75.0px;top:323.0px;" width="9" height="9" viewBox="0 0 9 9"><circle cx="3.6" cy="3.6" r="2.5" fill="none" stroke="#f0f0f0" stroke-width="1.3"/><path d="M5.5 5.5 L8.2 8.2" stroke="#f0f0f0" stroke-width="1.6" stroke-linecap="round"/></svg>
<div class="a" style="left:68.0px;top:404.5px;width:23px;height:23px;border-radius:50%;background:#d6d6d6"></div><svg class="a" style="left:75.0px;top:411.5px;" width="9" height="9" viewBox="0 0 9 9"><circle cx="3.6" cy="3.6" r="2.5" fill="none" stroke="#f0f0f0" stroke-width="1.3"/><path d="M5.5 5.5 L8.2 8.2" stroke="#f0f0f0" stroke-width="1.6" stroke-linecap="round"/></svg>
<div class="a" style="left:68.0px;top:484.5px;width:23px;height:23px;border-radius:50%;background:#d6d6d6"></div><svg class="a" style="left:75.0px;top:491.5px;" width="9" height="9" viewBox="0 0 9 9"><circle cx="3.6" cy="3.6" r="2.5" fill="none" stroke="#f0f0f0" stroke-width="1.3"/><path d="M5.5 5.5 L8.2 8.2" stroke="#f0f0f0" stroke-width="1.6" stroke-linecap="round"/></svg>
<div class="a" style="left:68.0px;top:556.0px;width:23px;height:23px;border-radius:50%;background:#d6d6d6"></div><svg class="a" style="left:75.0px;top:563.0px;" width="9" height="9" viewBox="0 0 9 9"><circle cx="3.6" cy="3.6" r="2.5" fill="none" stroke="#f0f0f0" stroke-width="1.3"/><path d="M5.5 5.5 L8.2 8.2" stroke="#f0f0f0" stroke-width="1.6" stroke-linecap="round"/></svg>
<div class="a" style="left:68.0px;top:627.0px;width:23px;height:23px;border-radius:50%;background:#d6d6d6"></div><svg class="a" style="left:75.0px;top:634.0px;" width="9" height="9" viewBox="0 0 9 9"><circle cx="3.6" cy="3.6" r="2.5" fill="none" stroke="#f0f0f0" stroke-width="1.3"/><path d="M5.5 5.5 L8.2 8.2" stroke="#f0f0f0" stroke-width="1.6" stroke-linecap="round"/></svg>
<div class="a" style="left:68.0px;top:707.0px;width:23px;height:23px;border-radius:50%;background:#d6d6d6"></div><svg class="a" style="left:75.0px;top:714.0px;" width="9" height="9" viewBox="0 0 9 9"><circle cx="3.6" cy="3.6" r="2.5" fill="none" stroke="#f0f0f0" stroke-width="1.3"/><path d="M5.5 5.5 L8.2 8.2" stroke="#f0f0f0" stroke-width="1.6" stroke-linecap="round"/></svg>
<div class="a t " style="left:75px;top:771.44px;font:12.6px/16px 'DejaVu Sans',sans-serif;color:#7a7a7a;">Página</div>
<div class="a t " style="left:881.70px;top:264.54px;font:bold 9.7px/13px 'DejaVu Sans',sans-serif;color:#111;transform:translateX(-100%);">Motivo da não conversão</div>
<div class="a t " style="left:888.1px;top:264.54px;font:bold 9.7px/13px 'DejaVu Sans',sans-serif;color:#111;">Motivo da não conversão</div>
<div class="a " style="left:-3px;top:2px;width:201.5px;height:44px;background:#2869a6;"></div>
<div class="a " style="left:198.5px;top:2px;width:770px;height:44px;background:#3273b0;"></div>
<div class="a " style="left:-3px;top:46px;width:980px;height:5px;background:linear-gradient(#dcdcdc,#e5e5e5);"></div>
<div class="a t " style="left:17.3px;top:10.96px;font:bold 16.6px/22px 'DejaVu Sans Condensed','DejaVu Sans',sans-serif;color:#fff;transform:scale(0.9147,1.000);transform-origin:0 16.74px;">SEND DECOR</div>
<div class="a " style="left:207.5px;top:14px;width:21.3px;height:3px;background:#fff;border-radius:1px;"></div>
<div class="a " style="left:207.5px;top:19.6px;width:21.3px;height:3px;background:#fff;border-radius:1px;"></div>
<div class="a " style="left:207.5px;top:25.2px;width:21.3px;height:3px;background:#fff;border-radius:1px;"></div>
<svg class="a" style="left:561px;top:15px;" width="17" height="18" viewBox="0 0 17 18"><path fill="none" stroke="#fff" stroke-width="1.5" stroke-linejoin="round" d="M8.5 1.8 C5.4 1.8 4.3 4.4 4.3 7 C4.3 10.6 2.8 12.6 1.2 14 H15.8 C14.2 12.6 12.7 10.6 12.7 7 C12.7 4.4 11.6 1.8 8.5 1.8 Z"/><path fill="#fff" d="M7.7 0.3 H9.3 V2 H7.7 Z M6.6 15 H10.4 C10.4 16.4 9.6 17.4 8.5 17.4 C7.4 17.4 6.6 16.4 6.6 15 Z"/></svg>
<div class="a " style="left:573px;top:5px;width:16px;height:16px;border-radius:50%;background:#fff;"></div>
<div class="a t " style="left:578.8px;top:8.56px;font:bold 8.2px/11px 'Liberation Sans',sans-serif;color:#3a5d8c;">4</div>
<div class="a t " style="left:617px;top:16.19px;font:11.6px/15px 'DejaVu Sans Condensed','DejaVu Sans',sans-serif;color:#fff;transform:scale(1.1437,1.000);transform-origin:0 11.51px;">(2) -</div>
<i class="a" style="left:643.0px;top:15.0px;width:8.4px;height:9.3px;background:#3f7cb7"></i><i class="a" style="left:651.1px;top:15.0px;width:8.4px;height:9.3px;background:#5a8fc6"></i><i class="a" style="left:659.3px;top:15.0px;width:8.4px;height:9.3px;background:#4a83be"></i><i class="a" style="left:667.4px;top:15.0px;width:8.4px;height:9.3px;background:#4d86bd"></i><i class="a" style="left:675.6px;top:15.0px;width:8.4px;height:9.3px;background:#4a84bc"></i><i class="a" style="left:683.7px;top:15.0px;width:8.4px;height:9.3px;background:#3d7ab4"></i><i class="a" style="left:691.9px;top:15.0px;width:8.4px;height:9.3px;background:#3a77b3"></i>
<i class="a" style="left:643.0px;top:24.0px;width:8.4px;height:9.3px;background:#4d86bd"></i><i class="a" style="left:651.1px;top:24.0px;width:8.4px;height:9.3px;background:#5d92c7"></i><i class="a" style="left:659.3px;top:24.0px;width:8.4px;height:9.3px;background:#6a9ccc"></i><i class="a" style="left:667.4px;top:24.0px;width:8.4px;height:9.3px;background:#6497c9"></i><i class="a" style="left:675.6px;top:24.0px;width:8.4px;height:9.3px;background:#5088c2"></i><i class="a" style="left:683.7px;top:24.0px;width:8.4px;height:9.3px;background:#4a83be"></i><i class="a" style="left:691.9px;top:24.0px;width:8.4px;height:9.3px;background:#4580bb"></i>
<svg class="a" style="left:742.5px;top:15.3px;" width="13" height="14" viewBox="0 0 13 14"><path fill="#fff" d="M6.5 0 C8.6 0 9.9 1.6 9.9 3.8 C9.9 6 8.6 7.8 6.5 7.8 C4.4 7.8 3.1 6 3.1 3.8 C3.1 1.6 4.4 0 6.5 0 Z M3 7.4 C3.9 8.5 5.1 9.1 6.5 9.1 C7.9 9.1 9.1 8.5 10 7.4 C11.9 7.8 13 9.2 13 11.4 C13 13 12 14 10.6 14 H2.4 C1 14 0 13 0 11.4 C0 9.2 1.1 7.8 3 7.4 Z"/></svg>
<div class="a t " style="left:762.8px;top:15.19px;font:11.6px/15px 'DejaVu Sans Condensed','DejaVu Sans',sans-serif;color:#fff;transform:scale(1.0952,1.000);transform-origin:0 11.51px;">SUPERVISOR (SUPERVISOR)</div>
<div class="a " style="left:924.8px;top:22.5px;width:0px;height:0px;border-left:2.5px solid transparent;border-right:2.5px solid transparent;border-top:3px solid #fff;"></div>
<div class="a " style="left:-3px;top:46px;width:44px;height:820px;background:#fff;"></div>
<div class="a " style="left:2px;top:46px;width:39px;height:820px;background:#f9fafc;box-shadow:1px 0 7px rgba(0,0,0,.16);"></div>
<svg class="a" style="left:6px;top:55px;" width="25" height="24" viewBox="0 0 25 24"><path fill="#e2a82a" d="M12.4 0 L25 11.2 L23.3 13 L20.6 10.6 L19.5 8.8 H5.5 L4.4 10.6 L1.7 13 L0 11.2 L3.6 7.6 V3.6 L5.4 2.6 L7 3.6 V4.8 Z"/><path fill="#0e73b5" d="M8 8 H17 Q18.3 8 18.1 9.4 L17.4 18 H7.6 L6.9 9.4 Q6.7 8 8 8 Z"/><path fill="#0e73b5" d="M3 12.4 Q3 10.4 5 10.4 Q6.8 10.4 6.8 12.4 V16 Q6.8 18.8 9.4 18.8 H15.6 Q18.2 18.8 18.2 16 V12.4 Q18.2 10.4 20 10.4 Q22 10.4 22 12.4 V19.5 Q22 22.4 19.4 22.4 L18.6 23.8 H17 L16.4 22.4 H8.6 L8 23.8 H6.4 L5.6 22.4 Q3 22.4 3 19.5 Z"/><path fill="none" stroke="#b7d6ec" stroke-width="0.9" d="M7.3 10.4 V16.2 Q7.3 18.4 9.6 18.4 H15.4 Q17.7 18.4 17.7 16.2 V10.4"/></svg>
<div class="a " style="left:2px;top:279px;width:39px;height:37.7px;background:#f4f4f5;"></div>
<div class="a " style="left:-3px;top:279px;width:3.2px;height:37.7px;background:#2f6fb0;"></div>
<svg class="a" style="left:12.7px;top:103.5px;" width="12.6" height="10" viewBox="0 0 12.6 10"><path fill="#333" d="M6.3 0 L12.6 5.3 L11.8 6.2 L6.3 1.6 L0.8 6.2 L0 5.3 Z M8.9 0.7 H10.3 V3 L8.9 1.8 Z M6.3 2.6 L10.7 6.3 V10 H7.4 V7 H5.2 V10 H1.9 V6.3 Z"/></svg>
<svg class="a" style="left:12px;top:140.4px;" width="14" height="12" viewBox="0 0 14 12"><circle cx="4.7" cy="6.4" r="2.65" fill="none" stroke="#333" stroke-width="1.7"/><rect x="3.8000000000000003" y="1.9100000000000001" width="1.8" height="1.8" fill="#333" transform="rotate(0.0 4.7 6.4)"/><rect x="3.8000000000000003" y="1.9100000000000001" width="1.8" height="1.8" fill="#333" transform="rotate(45.0 4.7 6.4)"/><rect x="3.8000000000000003" y="1.9100000000000001" width="1.8" height="1.8" fill="#333" transform="rotate(90.0 4.7 6.4)"/><rect x="3.8000000000000003" y="1.9100000000000001" width="1.8" height="1.8" fill="#333" transform="rotate(135.0 4.7 6.4)"/><rect x="3.8000000000000003" y="1.9100000000000001" width="1.8" height="1.8" fill="#333" transform="rotate(180.0 4.7 6.4)"/><rect x="3.8000000000000003" y="1.9100000000000001" width="1.8" height="1.8" fill="#333" transform="rotate(225.0 4.7 6.4)"/><rect x="3.8000000000000003" y="1.9100000000000001" width="1.8" height="1.8" fill="#333" transform="rotate(270.0 4.7 6.4)"/><rect x="3.8000000000000003" y="1.9100000000000001" width="1.8" height="1.8" fill="#333" transform="rotate(315.0 4.7 6.4)"/><circle cx="11.4" cy="2.9" r="1.55" fill="none" stroke="#333" stroke-width="1.1"/><rect x="10.8" y="0.1399999999999998" width="1.2" height="1.2" fill="#333" transform="rotate(0.0 11.4 2.9)"/><rect x="10.8" y="0.1399999999999998" width="1.2" height="1.2" fill="#333" transform="rotate(60.0 11.4 2.9)"/><rect x="10.8" y="0.1399999999999998" width="1.2" height="1.2" fill="#333" transform="rotate(120.0 11.4 2.9)"/><rect x="10.8" y="0.1399999999999998" width="1.2" height="1.2" fill="#333" transform="rotate(180.0 11.4 2.9)"/><rect x="10.8" y="0.1399999999999998" width="1.2" height="1.2" fill="#333" transform="rotate(240.0 11.4 2.9)"/><rect x="10.8" y="0.1399999999999998" width="1.2" height="1.2" fill="#333" transform="rotate(300.0 11.4 2.9)"/><circle cx="11.4" cy="9.6" r="1.55" fill="none" stroke="#333" stroke-width="1.1"/><rect x="10.8" y="6.84" width="1.2" height="1.2" fill="#333" transform="rotate(0.0 11.4 9.6)"/><rect x="10.8" y="6.84" width="1.2" height="1.2" fill="#333" transform="rotate(60.0 11.4 9.6)"/><rect x="10.8" y="6.84" width="1.2" height="1.2" fill="#333" transform="rotate(120.0 11.4 9.6)"/><rect x="10.8" y="6.84" width="1.2" height="1.2" fill="#333" transform="rotate(180.0 11.4 9.6)"/><rect x="10.8" y="6.84" width="1.2" height="1.2" fill="#333" transform="rotate(240.0 11.4 9.6)"/><rect x="10.8" y="6.84" width="1.2" height="1.2" fill="#333" transform="rotate(300.0 11.4 9.6)"/></svg>
<svg class="a" style="left:13px;top:179.2px;" width="12" height="11" viewBox="0 0 12 11"><rect x="0" y="1.0" width="12" height="1" fill="#333"/><rect x="2.6" y="0.0" width="2.2" height="3" fill="#333"/><rect x="0" y="5.0" width="12" height="1" fill="#333"/><rect x="7.2" y="4.0" width="2.2" height="3" fill="#333"/><rect x="0" y="9.0" width="12" height="1" fill="#333"/><rect x="3.4" y="8.0" width="2.2" height="3" fill="#333"/></svg>
<svg class="a" style="left:12.2px;top:216.2px;" width="13.6" height="11" viewBox="0 0 13.6 11"><rect x="0.3" y="0.19999999999999996" width="1.3" height="2.6" fill="#333" opacity=".75"/><rect x="3.6" y="0.6" width="10" height="2" fill="#333"/><rect x="0.3" y="4.1" width="1.3" height="2.6" fill="#333" opacity=".75"/><rect x="3.6" y="4.5" width="10" height="2" fill="#333"/><rect x="0.3" y="8.0" width="1.3" height="2.6" fill="#333" opacity=".75"/><rect x="3.6" y="8.4" width="10" height="2" fill="#333"/></svg>
<svg class="a" style="left:12.2px;top:254.20000000000002px;" width="13.6" height="10.2" viewBox="0 0 13.6 10.2"><rect x="0" y="0" width="2.1" height="2" rx=".5" fill="#333"/><rect x="3.6" y="0" width="10" height="2" rx=".4" fill="#333"/><rect x="0" y="4.1" width="2.1" height="2" rx=".5" fill="#333"/><rect x="3.6" y="4.1" width="10" height="2" rx=".4" fill="#333"/><rect x="0" y="8.2" width="2.1" height="2" rx=".5" fill="#333"/><rect x="3.6" y="8.2" width="10" height="2" rx=".4" fill="#333"/></svg>
<svg class="a" style="left:13px;top:291px;" width="12" height="12" viewBox="0 0 12 12"><circle cx="6" cy="6" r="4.95" fill="none" stroke="#222" stroke-width="1.85"/><path d="M6.4 3.2 V6.6 H3.9" fill="none" stroke="#222" stroke-width="1.35"/></svg>
<svg class="a" style="left:13.5px;top:329px;" width="11" height="12" viewBox="0 0 11 12"><path fill="#222" d="M0 0 H11 V1.4 H0 Z M0 10.6 H11 V12 H0 Z M1.2 1.4 H9.8 C9.8 4 7.4 5.2 6.6 6 C7.4 6.8 9.8 8 9.8 10.6 H1.2 C1.2 8 3.6 6.8 4.4 6 C3.6 5.2 1.2 4 1.2 1.4 Z"/></svg>
<div class="a " style="left:109px;top:104px;width:734px;height:712px;background:#fff;border-radius:6px;box-shadow:0 5px 15px rgba(0,0,0,.5);"></div>
<div class="a " style="left:109px;top:136px;width:734px;height:1px;background:#e5e5e5;"></div>
<div class="a t " style="left:115.4px;top:111.13px;font:12.6px/16px 'Liberation Sans',sans-serif;color:#555;transform:scale(1.0041,1.040);transform-origin:0 12.37px;">Observações do atendimento</div>
<div class="a t " style="left:824.3px;top:112.01px;font:bold 17px/22px 'Liberation Sans',sans-serif;color:#bdbdbd;-webkit-text-stroke:0.7px #bdbdbd;">×</div>
<div class="a " style="left:120px;top:149px;width:77px;height:26px;box-sizing:border-box;background:#3071b0;border:1px solid #2b66a0;border-radius:4px;"></div>
<div class="a t " style="left:132.2px;top:154.29px;font:bold 11px/14px 'Liberation Sans',sans-serif;color:#fff;transform:scale(1.0121,1.000);transform-origin:0 10.81px;">Confirmar</div>
<div class="a " style="left:201px;top:149px;width:77px;height:26px;box-sizing:border-box;background:#fff;border:1px solid #ccc;border-radius:4px;"></div>
<div class="a t " style="left:221.8px;top:154.29px;font:bold 11px/14px 'Liberation Sans',sans-serif;color:#222;transform:scale(1.0034,1.000);transform-origin:0 10.81px;">Fechar</div>
<div class="a " style="left:120px;top:184px;width:712px;height:88px;box-sizing:border-box;border:1px solid #ddd;background:#fff;box-shadow:0 1px 1px rgba(0,0,0,.05);"></div><div class="a " style="left:121px;top:185px;width:710px;height:28px;box-sizing:border-box;background:#f5f5f5;border-bottom:1px solid #ddd;"></div><div class="a t " style="left:132.2px;top:189.13px;font:12.6px/16px 'Liberation Sans',sans-serif;color:#111;transform:scale(1.0109,1.040);transform-origin:0 12.37px;">Atendimento iniciado</div>
<div class="a " style="left:120px;top:281px;width:712px;height:119.5px;box-sizing:border-box;border:1px solid #ddd;background:#fff;box-shadow:0 1px 1px rgba(0,0,0,.05);"></div><div class="a " style="left:121px;top:282px;width:710px;height:28px;box-sizing:border-box;background:#f5f5f5;border-bottom:1px solid #ddd;"></div><div class="a t " style="left:132.2px;top:286.13px;font:12.6px/16px 'Liberation Sans',sans-serif;color:#111;transform:scale(1.0070,1.040);transform-origin:0 12.37px;">Informações do cliente</div>
<div class="a " style="left:120px;top:410px;width:712px;height:380.5px;box-sizing:border-box;border:1px solid #ddd;background:#fff;box-shadow:0 1px 1px rgba(0,0,0,.05);"></div><div class="a " style="left:121px;top:411px;width:710px;height:28px;box-sizing:border-box;background:#f5f5f5;border-bottom:1px solid #ddd;"></div><div class="a t " style="left:132.2px;top:415.13px;font:12.6px/16px 'Liberation Sans',sans-serif;color:#111;transform:scale(1.0041,1.040);transform-origin:0 12.37px;">Observações do atendimento</div>
<div class="a t " style="left:130.2px;top:217.08px;font:12.2px/16px 'DejaVu Sans Condensed','DejaVu Sans',sans-serif;color:#444;transform:scale(1.0321,1.000);transform-origin:0 12.22px;-webkit-text-stroke:0.45px #444;">Uop</div>
<div class="a t " style="left:373px;top:217.08px;font:12.2px/16px 'DejaVu Sans Condensed','DejaVu Sans',sans-serif;color:#444;transform:scale(1.0126,1.000);transform-origin:0 12.22px;-webkit-text-stroke:0.45px #444;">Vendedor</div>
<div class="a t " style="left:616px;top:217.08px;font:12.2px/16px 'DejaVu Sans Condensed','DejaVu Sans',sans-serif;color:#444;transform:scale(1.0187,1.000);transform-origin:0 12.22px;-webkit-text-stroke:0.45px #444;">Início do atendimento</div>
<div class="a t " style="left:130.8px;top:239.75px;font:12px/16px 'DejaVu Sans Condensed','DejaVu Sans',sans-serif;color:#222;transform:scale(1.0000,1.050);transform-origin:0 12.15px;">2</div>
<div class="a t " style="left:373.2px;top:239.75px;font:12px/16px 'DejaVu Sans Condensed','DejaVu Sans',sans-serif;color:#222;transform:scale(0.9595,1.050);transform-origin:0 12.15px;">PAMELA</div>
<div class="a t " style="left:616.2px;top:239.75px;font:12px/16px 'DejaVu Sans Condensed','DejaVu Sans',sans-serif;color:#222;transform:scale(0.9989,1.050);transform-origin:0 12.15px;">11/03/2026 10:31:04</div>
<i class="a" style="left:417.0px;top:238.0px;width:10.3px;height:9.3px;background:#f0f0f0"></i><i class="a" style="left:427.0px;top:238.0px;width:10.3px;height:9.3px;background:#ededed"></i><i class="a" style="left:437.0px;top:238.0px;width:10.3px;height:9.3px;background:#f3f3f3"></i><i class="a" style="left:447.0px;top:238.0px;width:10.3px;height:9.3px;background:#ececec"></i><i class="a" style="left:457.0px;top:238.0px;width:10.3px;height:9.3px;background:#f4f4f4"></i><i class="a" style="left:467.0px;top:238.0px;width:10.3px;height:9.3px;background:#f2f2f2"></i><i class="a" style="left:477.0px;top:238.0px;width:10.3px;height:9.3px;background:#e9e9e9"></i><i class="a" style="left:487.0px;top:238.0px;width:10.3px;height:9.3px;background:#ededed"></i><i class="a" style="left:497.0px;top:238.0px;width:10.3px;height:9.3px;background:#e4e4e4"></i><i class="a" style="left:507.0px;top:238.0px;width:10.3px;height:9.3px;background:#efefef"></i><i class="a" style="left:517.0px;top:238.0px;width:10.3px;height:9.3px;background:#eaeaea"></i><i class="a" style="left:527.0px;top:238.0px;width:10.3px;height:9.3px;background:#eeeeee"></i><i class="a" style="left:537.0px;top:238.0px;width:10.3px;height:9.3px;background:#ececec"></i><i class="a" style="left:547.0px;top:238.0px;width:10.3px;height:9.3px;background:#f0f0f0"></i><i class="a" style="left:557.0px;top:238.0px;width:10.3px;height:9.3px;background:#f3f3f3"></i>
<i class="a" style="left:417.0px;top:247.0px;width:10.3px;height:9.3px;background:#ececec"></i><i class="a" style="left:427.0px;top:247.0px;width:10.3px;height:9.3px;background:#e6e6e6"></i><i class="a" style="left:437.0px;top:247.0px;width:10.3px;height:9.3px;background:#f0f0f0"></i><i class="a" style="left:447.0px;top:247.0px;width:10.3px;height:9.3px;background:#e2e2e2"></i><i class="a" style="left:457.0px;top:247.0px;width:10.3px;height:9.3px;background:#e0e0e0"></i><i class="a" style="left:467.0px;top:247.0px;width:10.3px;height:9.3px;background:#e9e9e9"></i><i class="a" style="left:477.0px;top:247.0px;width:10.3px;height:9.3px;background:#dadada"></i><i class="a" style="left:487.0px;top:247.0px;width:10.3px;height:9.3px;background:#d4d4d4"></i><i class="a" style="left:497.0px;top:247.0px;width:10.3px;height:9.3px;background:#dcdcdc"></i><i class="a" style="left:507.0px;top:247.0px;width:10.3px;height:9.3px;background:#d6d6d6"></i><i class="a" style="left:517.0px;top:247.0px;width:10.3px;height:9.3px;background:#dedede"></i><i class="a" style="left:527.0px;top:247.0px;width:10.3px;height:9.3px;background:#dadada"></i><i class="a" style="left:537.0px;top:247.0px;width:10.3px;height:9.3px;background:#d8d8d8"></i><i class="a" style="left:547.0px;top:247.0px;width:10.3px;height:9.3px;background:#d6d6d6"></i><i class="a" style="left:557.0px;top:247.0px;width:10.3px;height:9.3px;background:#e8e8e8"></i>
<div class="a t " style="left:275.90px;top:322.08px;font:12.2px/16px 'DejaVu Sans Condensed','DejaVu Sans',sans-serif;color:#444;transform:translateX(-100%) scale(1.0545,1.000);transform-origin:100% 12.22px;-webkit-text-stroke:0.45px #444;">Cliente</div>
<div class="a t " style="left:307.8px;top:322.99px;font:11.6px/15px 'DejaVu Sans Condensed','DejaVu Sans',sans-serif;color:#858585;transform:scale(1.0003,1.000);transform-origin:0 11.51px;">NÃO INFORMADO</div>
<div class="a t " style="left:275.90px;top:349.08px;font:12.2px/16px 'DejaVu Sans Condensed','DejaVu Sans',sans-serif;color:#444;transform:translateX(-100%) scale(1.0476,1.000);transform-origin:100% 12.22px;-webkit-text-stroke:0.45px #444;">Telefone</div>
<div class="a t " style="left:307.8px;top:349.99px;font:11.6px/15px 'DejaVu Sans Condensed','DejaVu Sans',sans-serif;color:#858585;transform:scale(1.0003,1.000);transform-origin:0 11.51px;">NÃO INFORMADO</div>
<div class="a t " style="left:275.90px;top:376.08px;font:12.2px/16px 'DejaVu Sans Condensed','DejaVu Sans',sans-serif;color:#444;transform:translateX(-100%) scale(1.0294,1.000);transform-origin:100% 12.22px;-webkit-text-stroke:0.45px #444;">E-mail</div>
<div class="a t " style="left:307.8px;top:376.99px;font:11.6px/15px 'DejaVu Sans Condensed','DejaVu Sans',sans-serif;color:#858585;transform:scale(1.0003,1.000);transform-origin:0 11.51px;">NÃO INFORMADO</div>
<div class="a " style="left:125px;top:455px;width:329px;height:193px;box-sizing:border-box;border:1px solid #ddd;border-radius:4px;"></div><div class="a " style="left:148px;top:453px;width:148px;height:5px;background:#fff;"></div><div class="a t " style="left:152.7px;top:445.78px;font:14.5px/19px 'Liberation Sans',sans-serif;color:#4f4f4f;transform:scale(0.9982,1.000);transform-origin:0 14.52px;">Adicionar observação</div>
<div class="a " style="left:490px;top:455px;width:328px;height:51.5px;box-sizing:border-box;border:1px solid #ddd;border-radius:4px;"></div><div class="a " style="left:513px;top:453px;width:94px;height:5px;background:#fff;"></div><div class="a t " style="left:517.7px;top:445.78px;font:14.5px/19px 'Liberation Sans',sans-serif;color:#4f4f4f;transform:scale(0.9972,1.000);transform-origin:0 14.52px;">Observações</div>
<div class="a " style="left:490px;top:528px;width:328px;height:73.5px;box-sizing:border-box;border:1px solid #ddd;border-radius:4px;"></div><div class="a " style="left:513px;top:526px;width:116.5px;height:5px;background:#fff;"></div><div class="a t " style="left:517.7px;top:518.78px;font:14.5px/19px 'Liberation Sans',sans-serif;color:#4f4f4f;transform:scale(0.9972,1.000);transform-origin:0 14.52px;">Próximo Contato</div>
<div class="a " style="left:125px;top:670px;width:329px;height:104.5px;box-sizing:border-box;border:1px solid #ddd;border-radius:4px;"></div><div class="a " style="left:148px;top:668px;width:138px;height:5px;background:#fff;"></div><div class="a t " style="left:152.7px;top:660.78px;font:14.5px/19px 'Liberation Sans',sans-serif;color:#4f4f4f;transform:scale(0.9956,1.000);transform-origin:0 14.52px;">Usuários envolvidos</div>
<div class="a " style="left:144px;top:491px;width:314.5px;height:138.5px;box-sizing:border-box;border:1px solid #cfcfcf;background:#fff;"></div>
<div class="a t " style="left:152.4px;top:491.71px;font:9.8px/13px 'DejaVu Sans',sans-serif;color:#111;">Teste Forbiden</div>
<svg class="a" style="left:448px;top:618px;" width="9" height="9" viewBox="0 0 9 9"><path d="M8.5 1 L1 8.5 M8.5 5 L5 8.5" stroke="#555" stroke-width="1"/></svg>
<div class="a t " style="left:503.6px;top:569.88px;font:12.2px/16px 'DejaVu Sans Condensed','DejaVu Sans',sans-serif;color:#333;transform:scale(1.0060,1.000);transform-origin:0 12.22px;-webkit-text-stroke:0.45px #333;">Data/Hora</div>
<div class="a " style="left:590px;top:564px;width:146.5px;height:22.5px;box-sizing:border-box;border:1px solid #d2d2d2;background:#fff;"></div>
<div class="a " style="left:716px;top:564px;width:1px;height:22.5px;background:#d2d2d2;"></div>
<div class="a t " style="left:651.5px;top:568.64px;font:10px/13px 'DejaVu Sans',sans-serif;color:#222;transform:scale(1.2510,1.000);transform-origin:0 9.96px;">/&nbsp;&nbsp;/</div>
<div class="a t " style="left:684.3px;top:568.64px;font:10px/13px 'DejaVu Sans',sans-serif;color:#222;">00:00</div>
<svg class="a" style="left:721.5px;top:570.5px;" width="10" height="10" viewBox="0 0 10 10"><rect x="0.5" y="1.5" width="9" height="8" fill="#fff" stroke="#c9c9c9" stroke-width="1"/><rect x="0.5" y="1.5" width="9" height="2" fill="#d5d5d5"/><rect x="4" y="5" width="2" height="3" fill="#d0d8e4"/></svg>
<div class="a " style="left:141px;top:706px;width:299px;height:54.5px;box-sizing:border-box;border:1px solid #ddd;background:#fff;"></div>
<div class="a " style="left:142px;top:707px;width:297px;height:26.5px;box-sizing:border-box;background:#f5f5f5;border-bottom:1px solid #ddd;"></div>
<div class="a t " style="left:147.6px;top:712.91px;font:bold 9.8px/13px 'DejaVu Sans',sans-serif;color:#111;transform:scale(0.9930,1.000);transform-origin:0 9.89px;">Usuário</div>
<div class="a t " style="left:152.6px;top:741.92px;font:9.2px/12px 'DejaVu Sans Condensed','DejaVu Sans',sans-serif;color:#111;transform:scale(1.0038,1.000);transform-origin:0 9.18px;">PAMELA</div>
<div class="a " style="left:186px;top:740px;width:8.6px;height:12px;background:#e4e4e6;"></div>
<div class="a nb" style="left:321.7px;top:9.5px"><b style="display:inline-block;transform:scaleX(.9)">2</b></div>
<div class="a nb" style="left:142.7px;top:113.5px"><b style="display:inline-block;transform:scaleX(.9)">4</b></div>
<div class="a nb" style="left:252.7px;top:511.5px"><b style="display:inline-block;transform:scaleX(.9)">3</b></div>
</div></div>
</body></html>
